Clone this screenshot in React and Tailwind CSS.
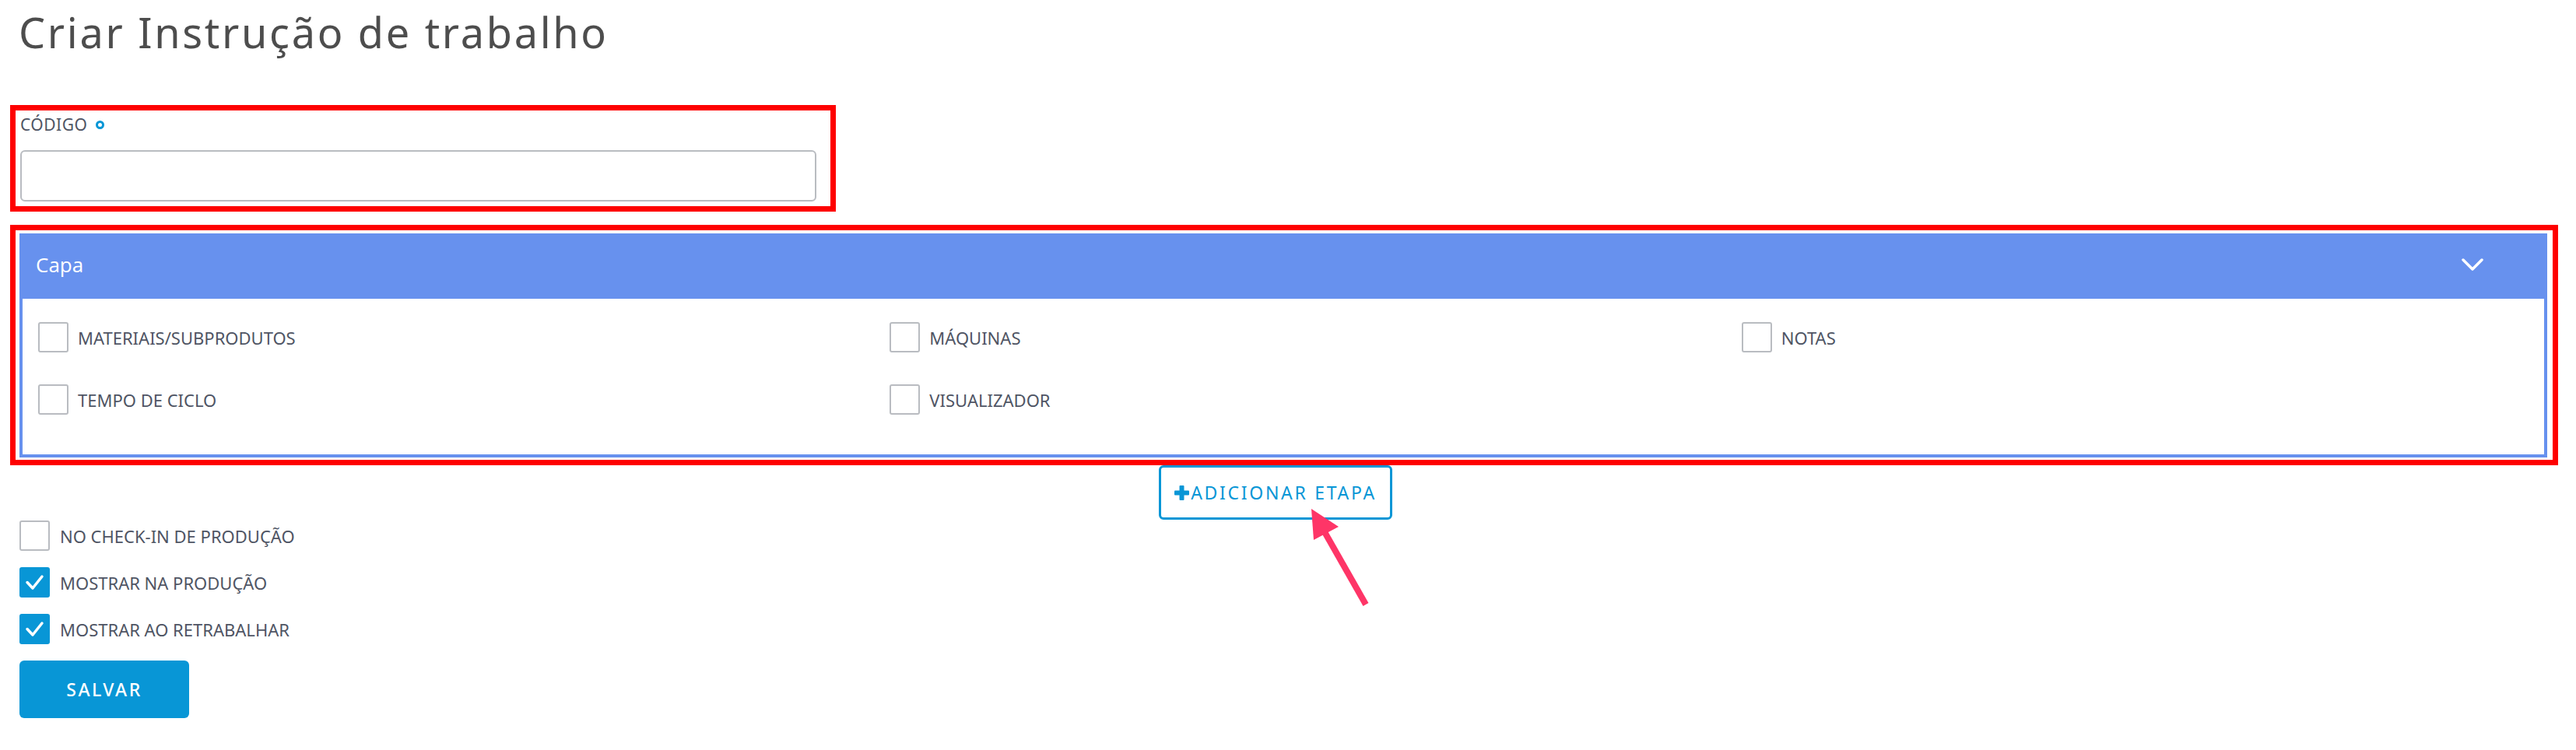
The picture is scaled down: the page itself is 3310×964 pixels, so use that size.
import React from "react";

const labelColor = "text-[#4f5564]";

function Box({ checked }) {
  if (checked) {
    return (
      <span className="flex h-[39px] w-[39px] shrink-0 items-center justify-center rounded-[3px] bg-[#0896d6]">
        <svg width="39" height="39" viewBox="0 0 39 39">
          <polyline
            points="10,19.5 17,27 29,12"
            fill="none"
            stroke="#fff"
            strokeWidth="3.5"
            strokeLinecap="round"
            strokeLinejoin="round"
          />
        </svg>
      </span>
    );
  }
  return (
    <span className="block h-[39px] w-[39px] shrink-0 rounded-[3px] border-2 border-[#b9bcc1] bg-white" />
  );
}

function Check({ label, checked, gap = "gap-[12px]" }) {
  return (
    <label className={`flex items-center ${gap}`}>
      <Box checked={checked} />
      <span className={`text-[22px] leading-[30px] ${labelColor}`}>{label}</span>
    </label>
  );
}

export default function App() {
  const opcoes = [
    "MATERIAIS/SUBPRODUTOS",
    "MÁQUINAS",
    "NOTAS",
    "TEMPO DE CICLO",
    "VISUALIZADOR",
  ];

  return (
    <div className="relative min-h-screen bg-white font-['Noto_Sans',sans-serif]">
      <h1 className="mt-[4px] pl-[24px] text-[54px] font-normal leading-[74px] tracking-[2.7px] text-[#4d4d4d]">
        Criar Instrução de trabalho
      </h1>

      {/* código */}
      <div className="ml-[13px] mt-[57px] w-[1061px] border-[7px] border-[#fe0000] pb-[6px] pl-[6px] pr-[18px] pt-[3px]">
        <div className={`flex items-center gap-[11px] text-[21px] leading-[30px] tracking-[0.5px] ${labelColor}`}>
          CÓDIGO
          <span className="block h-[11px] w-[11px] rounded-full border-[3px] border-[#0896d6]" />
        </div>
        <input
          type="text"
          className="mt-[18px] block h-[66px] w-full rounded-[6px] border-2 border-[#b9bcc1] px-3 text-[22px] focus:outline-none"
        />
      </div>

      {/* capa */}
      <div className="ml-[13px] mt-[17px] w-[3274px] border-[7px] border-[#fe0000] pb-[3px] pl-[5px] pr-[7px] pt-[4px]">
        <div className="border-4 border-[#6791ee]">
          <div className="flex h-[80px] items-center justify-between bg-[#6791ee] pb-[8px] pl-[17px] pr-[78px]">
            <span className="font-['Open_Sans',sans-serif] text-[26px] text-white">Capa</span>
            <svg width="28" height="16" viewBox="0 0 28 16">
              <polyline
                points="2,2 14,14 26,2"
                fill="none"
                stroke="#fff"
                strokeWidth="3.5"
                strokeLinecap="round"
                strokeLinejoin="round"
              />
            </svg>
          </div>
          <div className="grid grid-cols-3 gap-x-[83px] gap-y-[41px] bg-white px-5 pb-[51px] pt-[30px]">
            {opcoes.map((o) => (
              <Check key={o} label={o} />
            ))}
          </div>
        </div>
      </div>

      <div className="flex w-[3278px] justify-center">
        <button className="flex h-[70px] w-[300px] items-center justify-center rounded-[6px] border-[3px] border-[#0896d6] text-[23px] tracking-[2.7px] text-[#0896d6]">
          <svg width="19" height="19" viewBox="0 0 19 19" className="mr-[2px]">
            <rect x="6.5" y="0" width="6" height="19" rx="1" fill="#0896d6" />
            <rect x="0" y="6.5" width="19" height="6" rx="1" fill="#0896d6" />
          </svg>
          ADICIONAR ETAPA
        </button>
      </div>

      <div className="ml-[25px] mt-[1px] flex flex-col gap-[21px]">
        <Check label="NO CHECK-IN DE PRODUÇÃO" gap="gap-[13px]" />
        <Check label="MOSTRAR NA PRODUÇÃO" checked gap="gap-[13px]" />
        <Check label="MOSTRAR AO RETRABALHAR" checked gap="gap-[13px]" />
        <button className="h-[74px] w-[218px] rounded-[6px] bg-[#0896d6] text-[23px] font-medium tracking-[2.5px] text-white">
          SALVAR
        </button>
      </div>

      {/* seta de anotação */}
      <svg
        className="absolute left-[1670px] top-[640px]"
        width="100"
        height="145"
        viewBox="0 0 100 145"
      >
        <line x1="31" y1="38" x2="85" y2="133" stroke="#fe3567" strokeWidth="8" />
        <polygon points="15,10 50,33 18,50" fill="#fe3567" />
      </svg>
    </div>
  );
}
